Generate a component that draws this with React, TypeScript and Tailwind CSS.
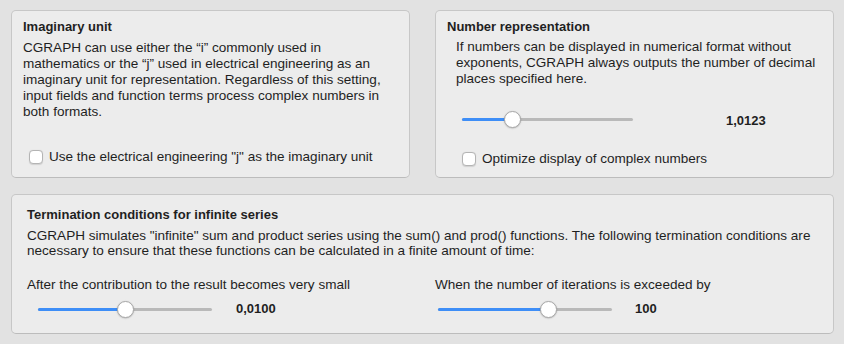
import React from "react";

function Checkbox({ label }: { label: string }) {
  return (
    <label className="flex items-center gap-[6px] leading-4">
      <span className="h-[14px] w-[14px] shrink-0 rounded-[4px] border border-[#b4b4b4] bg-white shadow-[0_0.5px_1px_rgba(0,0,0,0.12)]" />
      <span>{label}</span>
    </label>
  );
}

function Slider({ width, value }: { width: number; value: number }) {
  const pos = Math.round(width * value);
  return (
    <div className="relative h-5 shrink-0" style={{ width }}>
      <div className="absolute left-0 right-0 top-[8.5px] h-[3px] rounded-full bg-[#b9b9b9]" />
      <div
        className="absolute left-0 top-[8.5px] h-[3px] rounded-full bg-[#3e8ef7]"
        style={{ width: pos }}
      />
      <div
        className="absolute top-[1.5px] h-[17px] w-[17px] rounded-full border border-[#a9a9a9] bg-white shadow-[0_0.5px_1.5px_rgba(0,0,0,0.25)]"
        style={{ left: pos - 8.5 }}
      />
    </div>
  );
}

export default function App() {
  return (
    <div className="min-h-[344px] w-[844px] bg-[#e2e2e2] pl-[11px] pr-[10px] pt-[10px] font-['Liberation_Sans',Arial,sans-serif] text-[13.55px] text-[#1f1f1f]">
      <div className="grid grid-cols-2 gap-[25px]">
        <section className="flex h-[168px] flex-col rounded-[5px] border border-[#c7c7c7] border-b-[#bcbcbc] bg-[#ececec] pl-[11px] pt-[8px]">
          <h2 className="text-[13px] font-bold leading-4">Imaginary unit</h2>
          <p className="mt-[5px] leading-4">
            CGRAPH can use either the “i” commonly used in
            <br />
            mathematics or the “j” used in electrical engineering as an
            <br />
            imaginary unit for representation. Regardless of this setting,
            <br />
            input fields and function terms process complex numbers in
            <br />
            both formats.
          </p>
          <div className="mb-[12px] mt-auto pl-[6px]">
            <Checkbox label={'Use the electrical engineering "j" as the imaginary unit'} />
          </div>
        </section>

        <section className="flex h-[168px] flex-col rounded-[5px] border border-[#c7c7c7] border-b-[#bcbcbc] bg-[#ececec] pl-[11px] pt-[8px]">
          <h2 className="text-[13px] font-bold leading-4">Number representation</h2>
          <div className="pl-[9px]">
            <p className="mt-[4px] leading-4">
              If numbers can be displayed in numerical format without
              <br />
              exponents, CGRAPH always outputs the number of decimal
              <br />
              places specified here.
            </p>
            <div className="mt-[21px] flex items-center pl-[6px]">
              <Slider width={171} value={0.29} />
              <span className="ml-[93px] mt-[3px] text-[13px] font-bold">1,0123</span>
            </div>
            <div className="mt-[20px] pl-[6px]">
              <Checkbox label="Optimize display of complex numbers" />
            </div>
          </div>
        </section>
      </div>

      <section className="mt-[16px] rounded-[5px] border border-[#c7c7c7] border-b-[#bcbcbc] bg-[#ececec] pb-[14px] pl-[15px] pt-[12px]">
        <h2 className="text-[13px] font-bold leading-4">Termination conditions for infinite series</h2>
        <p className="mt-[5px] leading-[15px]">
          CGRAPH simulates "infinite" sum and product series using the sum() and prod() functions. The following termination conditions are
          <br />
          necessary to ensure that these functions can be calculated in a finite amount of time:
        </p>
        <div className="mt-[19px] grid grid-cols-[408px_1fr]">
          <div>
            <div className="leading-4">After the contribution to the result becomes very small</div>
            <div className="mt-[6px] flex items-center pl-[11px]">
              <Slider width={174} value={0.5} />
              <span className="ml-[24px] text-[13px] font-bold">0,0100</span>
            </div>
          </div>
          <div>
            <div className="leading-4">When the number of iterations is exceeded by</div>
            <div className="mt-[6px] flex items-center pl-[3px]">
              <Slider width={174} value={0.63} />
              <span className="ml-[23px] text-[13px] font-bold">100</span>
            </div>
          </div>
        </div>
      </section>
    </div>
  );
}
